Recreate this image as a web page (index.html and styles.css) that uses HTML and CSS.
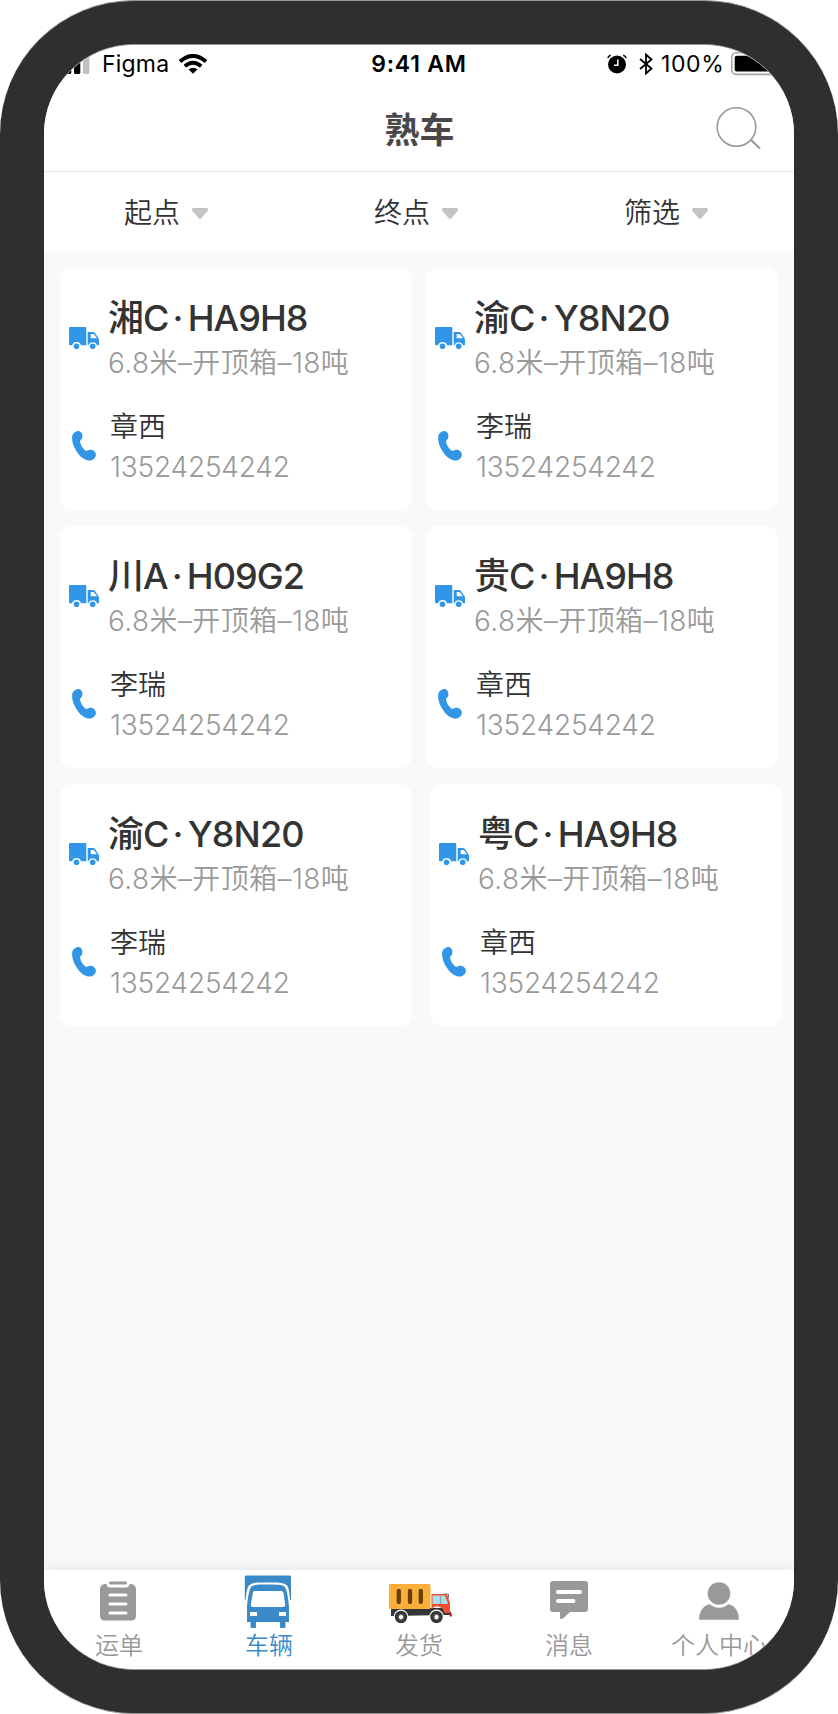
FILE: index.html
```
<!DOCTYPE html>
<html lang="zh-CN">

<head>
  <meta charset="UTF-8">
  <meta name="viewport" content="width=device-width, initial-scale=1.0">
  <title>熟车</title>
  <link rel="stylesheet" href="styles.css">
</head>

<body>
  <svg class="icon-defs" width="0" height="0">
    <symbol id="icon-truck" viewBox="0 0 30 22">
      <path d="M1 0H16.5Q17.3 0 17.3 1V18.3H12A4.6 4.6 0 0 0 3.2 18.3H1Q0 18.3 0 17.3V1Q0 0 1 0Z" />
      <path fill-rule="evenodd" d="M18.7 5H24Q25.3 5 26 6L29.4 11Q30 12 30 13V18.3H28A4.6 4.6 0 0 0 19.4 18.3H18.7ZM21.7 7V11.3H28L25.2 7.5Q24.8 7 24 7Z" />
      <circle cx="7.5" cy="19.2" r="2.8" />
      <circle cx="23.7" cy="19.2" r="2.8" />
    </symbol>
    <symbol id="icon-phone" viewBox="0 0 24 30">
      <path d="M4.5 .4C7.5 -.7 10.2 1.3 10.4 4.6C10.5 7 9.7 8.6 8 9.7C8.2 13.4 10.6 17.6 14.4 20.1C16.2 18.9 18.4 18.3 20.2 18.9C23 19.8 24.6 22.8 23.6 25.6C22.7 28 20.5 29.5 18 29.6C12.5 29.6 7.5 25.6 3.8 19C.8 13.7 -.4 9 .3 4.8C.6 2.6 2 1.2 4.5 .4Z" />
    </symbol>
    <symbol id="icon-arrow" viewBox="0 0 16 12">
      <path d="M1.5 0H14.5Q17 1 15.500 3L9.500 10Q8 11.800 6.500 10L.5 3Q-1 1 1.5 0Z" />
    </symbol>
  </svg>

  <div class="phone">
    <div class="screen">
      <div class="status-bar">
        <div class="status-left">
          <svg width="26" height="20" viewBox="0 0 26 20">
            <rect x="1" y="8" width="6.3" height="12" rx="1.5" />
            <rect x="10" y="4" width="6.3" height="16" rx="1.5" />
            <rect x="19" y="0" width="6.3" height="20" rx="1.5" fill="#bfbfbf" />
          </svg>
          <span class="carrier">Figma</span>
          <svg width="30" height="20" viewBox="0 0 30 20">
            <path d="M2 7.6Q15-3.6 28 7.6" fill="none" stroke="#000" stroke-width="4" />
            <path d="M6.8 12.2Q15 5.4 23.2 12.2" fill="none" stroke="#000" stroke-width="3.8" />
            <path d="M10.5 15.3Q15 12.3 19.5 15.3L15 19.8Z" />
          </svg>
        </div>
        <div class="time">9:41 AM</div>
        <div class="status-right">
          <svg width="20" height="20" viewBox="0 0 20 20">
            <circle cx="10" cy="10.5" r="9" />
            <path d="M.8 4Q1.5 1.8 3.8 1.2M16.2 1.2Q18.5 1.8 19.2 4" fill="none" stroke="#000" stroke-width="1.5" />
            <path d="M10.8 5.5V11.2H7" fill="none" stroke="#fff" stroke-width="1.5" />
          </svg>
          <svg class="bluetooth" width="14" height="22" viewBox="0 0 14 22">
            <path d="M1 6L12.5 15.5L7 20.5V1.5L12.5 6.5L1 16" fill="none" stroke="#000" stroke-width="1.8" />
          </svg>
          <span class="percent">100%</span>
          <svg width="54" height="24" viewBox="0 0 54 24">
            <rect x=".8" y=".8" width="47" height="21.6" rx="4.5" fill="none" stroke="#a6a6a6" stroke-width="1.6" />
            <rect x="3.7" y="3.7" width="41" height="15.8" rx="2" />
          </svg>
        </div>
      </div>

      <div class="header">
        <h1>熟车</h1>
        <svg class="search" width="46" height="44" viewBox="0 0 46 44">
          <circle cx="20.5" cy="21" r="19.3" />
          <path d="M35 34L44 42.500" stroke-width="2" />
        </svg>
      </div>

      <div class="filters">
        <div class="filter"><span>起点</span><svg><use href="#icon-arrow" /></svg></div>
        <div class="filter"><span>终点</span><svg><use href="#icon-arrow" /></svg></div>
        <div class="filter"><span>筛选</span><svg><use href="#icon-arrow" /></svg></div>
      </div>

      <div class="list">
        <div class="row">
          <div class="card">
            <div class="info">
              <svg class="truck"><use href="#icon-truck" /></svg>
              <div>
                <div class="plate">湘C<span class="dot">·</span>HA9H8</div>
                <div class="spec">6.8米–开顶箱–18吨</div>
              </div>
            </div>
            <div class="info driver">
              <svg class="tel"><use href="#icon-phone" /></svg>
              <div>
                <div class="name">章西</div>
                <div class="number">13524254242</div>
              </div>
            </div>
          </div>
          <div class="card">
            <div class="info">
              <svg class="truck"><use href="#icon-truck" /></svg>
              <div>
                <div class="plate">渝C<span class="dot">·</span>Y8N20</div>
                <div class="spec">6.8米–开顶箱–18吨</div>
              </div>
            </div>
            <div class="info driver">
              <svg class="tel"><use href="#icon-phone" /></svg>
              <div>
                <div class="name">李瑞</div>
                <div class="number">13524254242</div>
              </div>
            </div>
          </div>
        </div>

        <div class="row">
          <div class="card">
            <div class="info">
              <svg class="truck"><use href="#icon-truck" /></svg>
              <div>
                <div class="plate">川A<span class="dot">·</span>H09G2</div>
                <div class="spec">6.8米–开顶箱–18吨</div>
              </div>
            </div>
            <div class="info driver">
              <svg class="tel"><use href="#icon-phone" /></svg>
              <div>
                <div class="name">李瑞</div>
                <div class="number">13524254242</div>
              </div>
            </div>
          </div>
          <div class="card">
            <div class="info">
              <svg class="truck"><use href="#icon-truck" /></svg>
              <div>
                <div class="plate">贵C<span class="dot">·</span>HA9H8</div>
                <div class="spec">6.8米–开顶箱–18吨</div>
              </div>
            </div>
            <div class="info driver">
              <svg class="tel"><use href="#icon-phone" /></svg>
              <div>
                <div class="name">章西</div>
                <div class="number">13524254242</div>
              </div>
            </div>
          </div>
        </div>

        <div class="row row-wide">
          <div class="card">
            <div class="info">
              <svg class="truck"><use href="#icon-truck" /></svg>
              <div>
                <div class="plate">渝C<span class="dot">·</span>Y8N20</div>
                <div class="spec">6.8米–开顶箱–18吨</div>
              </div>
            </div>
            <div class="info driver">
              <svg class="tel"><use href="#icon-phone" /></svg>
              <div>
                <div class="name">李瑞</div>
                <div class="number">13524254242</div>
              </div>
            </div>
          </div>
          <div class="card">
            <div class="info">
              <svg class="truck"><use href="#icon-truck" /></svg>
              <div>
                <div class="plate">粤C<span class="dot">·</span>HA9H8</div>
                <div class="spec">6.8米–开顶箱–18吨</div>
              </div>
            </div>
            <div class="info driver">
              <svg class="tel"><use href="#icon-phone" /></svg>
              <div>
                <div class="name">章西</div>
                <div class="number">13524254242</div>
              </div>
            </div>
          </div>
        </div>
      </div>

      <div class="tab-bar">
        <div class="tab">
          <svg class="tab-order" width="38" height="54" viewBox="0 0 38 54">
            <rect x="10" y="6.5" width="18" height="3" rx="1.5" />
            <path d="M6 9H7.5Q8 12.5 11 12.5H27Q30 12.5 30.5 9H32Q37 9.5 37 14.5V40.5Q37 45.5 32 45.5H6Q1 45.5 1 40.5V14.5Q1 9.5 6 9Z" />
            <path d="M11 20H27M11 29H27M11 38H27" stroke="#fff" stroke-width="3" stroke-linecap="round" />
          </svg>
          <span>运单</span>
        </div>
        <div class="tab active">
          <svg class="tab-bus" width="48" height="54" viewBox="0 0 48 54">
            <path d="M2 .5H46Q47 .5 47 1.5V25L46 25C45.5 18 45 12 42.5 10C39 7 31 7.5 24 7.5C17 7.5 9 7 5.5 10C3 12 2.5 18 1.5 25H.8V1.5Q.8 .5 2 .5Z" />
            <path fill-rule="evenodd" d="M24 9.5C32 9.5 39 9.5 41 12C43 15 44.5 25 45 32V47H41.5V52Q41.5 53 40.5 53H37Q36 53 36 52V47H12V52Q12 53 11 53H7.5Q6.5 53 6.5 52V47H3V32C3.5 25 5 15 7 12C9 9.5 16 9.5 24 9.5ZM10.500 16Q9 16 8.800 18L6.800 29.500Q6.500 32 9 32H39Q41.500 32 41.200 29.500L39.500 18Q39.200 16 37.500 16ZM6 37V41H13V37ZM35 37V41H42V37Z" />
          </svg>
          <span>车辆</span>
        </div>
        <div class="tab">
          <svg class="tab-ship" width="66" height="54" viewBox="0 0 66 54">
            <path d="M4 33H55V31H62V36L64 37V40H60L4 41Z" fill="#353535" />
            <rect x="2" y="9" width="41.5" height="25" rx="1.5" fill="#faaf3b" />
            <path d="M11.8 16V27M23 16V27M33.8 16V27" fill="none" stroke="#693f05" stroke-width="4.3" stroke-linecap="round" />
            <path d="M44.5 19H60L63 28V38H57A7 7 0 0 0 44.5 34Z" fill="#ed4f32" />
            <path d="M45.5 20.5H58L61 29H45.5Z" fill="#a8dfe9" />
            <path d="M53.5 20.5V29" stroke="#8aa3a8" stroke-width="1.2" />
            <path d="M57 19H61.5V23" fill="none" stroke="#777" stroke-width="1" />
            <circle cx="14" cy="42" r="6.800" fill="#353535" stroke="#fff" stroke-width="1.2" />
            <circle cx="14" cy="42" r="2.5" fill="#fff" stroke="#777" />
            <circle cx="49.5" cy="42" r="6.800" fill="#353535" stroke="#fff" stroke-width="1.2" />
            <circle cx="49.5" cy="42" r="2.5" fill="#fff" stroke="#777" />
            <rect x="62.5" y="38.5" width="2.5" height="3" fill="#d8283b" />
          </svg>
          <span>发货</span>
        </div>
        <div class="tab">
          <svg width="40" height="54" viewBox="0 0 40 54">
            <path d="M4 6H36Q39 6 39 9V34Q39 37 36 37H21L14 43.5Q11 45 11 42.5V37H4Q1 37 1 34V9Q1 6 4 6Z" />
            <path d="M9 17H31M9 26H24.5" stroke="#fff" stroke-width="4" stroke-linecap="round" />
          </svg>
          <span>消息</span>
        </div>
        <div class="tab">
          <svg width="40" height="54" viewBox="0 0 40 54">
            <circle cx="20" cy="18.5" r="11.3" />
            <path d="M0 44.7Q0 32 10.500 29Q14 32.700 20 32.700Q26 32.700 29.500 29Q40 32 40 44.700Z" />
          </svg>
          <span>个人中心</span>
        </div>
      </div>
    </div>
  </div>
</body>

</html>
```
FILE: styles.css
```
* {
  box-sizing: border-box;
}

body {
  margin: 0;
  background: #fff;
  font-family: Inter, "Noto Sans CJK SC", sans-serif;
  color: #333;
}

svg {
  display: block;
  flex: none;
}

.icon-defs {
  position: absolute;
}

.phone {
  width: 838px;
  height: 1714px;
  padding: 43px 44px;
  background: #2f2f2f;
  border-top: 1px solid #979797;
  border-bottom: 1px solid #979797;
  border-radius: 134px;
}

.screen {
  height: 1626px;
  display: flex;
  flex-direction: column;
  overflow: hidden;
  background: #f9f9f9;
  border-top: 1px solid #979797;
  border-bottom: 1px solid #979797;
  border-radius: 90px;
}

/* status bar */
.status-bar {
  height: 39px;
  padding-bottom: 1px;
  display: grid;
  grid-template-columns: 1fr auto 1fr;
  align-items: center;
  background: #fff;
  color: #000;
  font-size: 23px;
}

.status-left,
.status-right {
  display: flex;
  align-items: center;
}

.status-left {
  padding-left: 20px;
}

.carrier {
  width: 69px;
  margin: 0 7px 0 12px;
  letter-spacing: 0.2px;
}

.time {
  font-weight: 600;
  letter-spacing: 0.8px;
}

.status-right {
  justify-content: flex-end;
  margin-right: -40px;
  padding-right: 49px;
}

.bluetooth {
  margin: 0 8px 0 12px;
}

.percent {
  width: 64px;
  margin-right: 6px;
  letter-spacing: 0.6px;
}

/* header */
.header {
  height: 88px;
  display: grid;
  grid-template-columns: 1fr auto 1fr;
  align-items: center;
  background: #fff;
  border-bottom: 1px solid #e8e8e8;
}

.header h1 {
  grid-column: 2;
  margin: 0;
  padding: 4px 0 0 1px;
  color: #484848;
  font-size: 35px;
  font-weight: 700;
  line-height: 44px;
}

.search {
  justify-self: end;
  margin-right: 32px;
  fill: none;
  stroke: #999;
  stroke-width: 1.6;
}

.filters {
  height: 80px;
  display: flex;
  background: #fff;
}

.filter {
  width: 250px;
  padding-left: 80px;
  display: flex;
  align-items: center;
  gap: 12px;
  font-size: 28px;
  font-weight: 350;
}

.filter span {
  padding-bottom: 2px;
}

.filter svg {
  width: 16px;
  height: 12px;
  margin-top: 3px;
  fill: #c4c4c4;
}

/* vehicle list */
.list {
  flex: 1;
  padding: 16px;
  display: flex;
  flex-direction: column;
  gap: 16px;
}

.row {
  display: flex;
  gap: 14px;
}

.row-wide {
  gap: 18px;
}

.card {
  flex: none;
  width: 352px;
  height: 242px;
  padding: 30px 8px 0;
  background: #fff;
  border-radius: 12px;
}

.info {
  display: grid;
  grid-template-columns: 40px 1fr;
  align-items: center;
  white-space: nowrap;
}

.driver {
  margin-top: 24px;
}

.truck {
  width: 30px;
  height: 22px;
  margin: 0 0 6px 1px;
  fill: #3296e8;
}

.tel {
  width: 24px;
  height: 30px;
  margin: 0 0 2px 4px;
  fill: #3296e8;
}

.plate {
  height: 40px;
  font-size: 36px;
  font-weight: 500;
  line-height: 40px;
  letter-spacing: -0.9px;
}

.dot {
  margin: 0 5px 0 4px;
}

.spec {
  height: 40px;
  margin-top: 5px;
  color: #999;
  font-size: 28px;
  font-weight: 350;
  line-height: 40px;
  letter-spacing: 0.4px;
}

.name,
.number {
  padding-left: 2px;
  font-size: 28px;
  font-weight: 350;
  line-height: 40px;
}

.number {
  color: #999;
  font-weight: 300;
  letter-spacing: -0.2px;
}

/* tab bar */
.tab-bar {
  height: 99px;
  display: flex;
  background: #fff;
  box-shadow: 0 -2px 16px rgba(0, 0, 0, 0.08);
}

.tab {
  width: 150px;
  padding-top: 5px;
  display: flex;
  flex-direction: column;
  align-items: center;
  gap: 2px;
  color: #999;
  fill: #999;
  font-size: 24px;
  font-weight: 350;
  line-height: 30px;
  white-space: nowrap;
}

.active {
  color: #3a8aca;
  fill: #3a8aca;
}

.tab-order {
  margin-right: 3px;
}

.tab-bus {
  margin-right: 2px;
}

.tab-ship {
  margin-left: 2px;
}
```
